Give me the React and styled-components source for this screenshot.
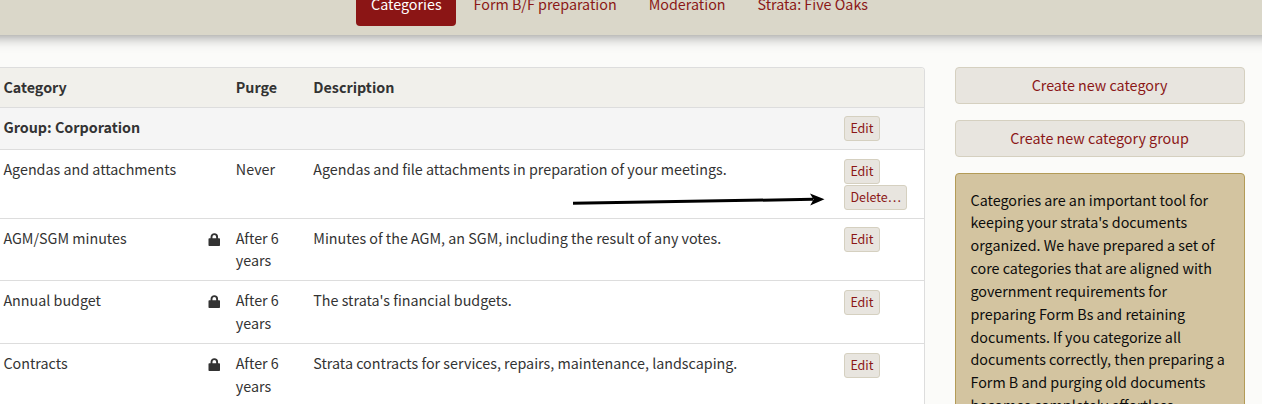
import React from "react";
import styled, { createGlobalStyle } from "styled-components";

const GlobalStyle = createGlobalStyle`
  * { box-sizing: border-box; }
  html, body { margin: 0; height: 404px; overflow: hidden; }
  body {
    background: #fbfbf9;
    color: #333;
    font: 14.32px/22.857px "Noto Sans CJK SC", "Noto Sans", sans-serif;
  }
`;

const Page = styled.div`
  height: 404px;
  overflow: hidden;
`;

const NavBar = styled.nav`
  display: flex;
  align-items: flex-end;
  gap: 2.4px;
  height: 35px;
  margin: 0 -20px;
  padding: 0 0 9px 376px;
  background: #dad7c9;
  box-shadow: 0 0 15px rgba(0, 0, 0, 0.5);
`;

const NavPill = styled.a`
  flex: none;
  height: 43px;
  padding: 10px 14.6px 10px 15px;
  border-radius: 4px;
  white-space: nowrap;
  color: ${(p) => (p.$active ? "#fff" : "#8b1717")};
  background: ${(p) => (p.$active ? "#8b1515" : "transparent")};
`;

const Content = styled.main`
  display: flex;
  align-items: flex-start;
  gap: 30px;
  padding-top: 32px;
`;

const Panel = styled.section`
  flex: none;
  width: 925px;
  background: #fff;
  border: 1px solid #ddd;
  border-left: 0;
  border-radius: 0 4px 4px 0;
  overflow: hidden;
`;

const Row = styled.div`
  display: grid;
  grid-template-columns: 204.5px 23.3px 77.5px 531.2px 1fr;
  height: ${(p) => p.$height}px;
  background: ${(p) => p.$tone || "#fff"};
  font-weight: ${(p) => (p.$strong ? 700 : 400)};
  border-top: ${(p) => (p.$first ? 0 : "1px solid #ddd")};
`;

const Cell = styled.div`
  padding: 8px 0 0 ${(p) => (p.$icon ? 3.5 : 8)}px;
  &:first-child { padding-left: 3.4px; }
`;

const Actions = styled.div`
  display: flex;
  flex-direction: column;
  align-items: flex-start;
  gap: 1px;
  padding: ${(p) => p.$top || 8}px 0 0 7.5px;
`;

const SmallButton = styled.button`
  height: 25px;
  padding: 0 5.4px 2px;
  border: 1px solid #d5d0c0;
  border-radius: 3px;
  background: #e8e5df;
  color: #8b1717;
  font: 400 12.5px/21px "Noto Sans CJK SC", "Noto Sans", sans-serif;
  white-space: nowrap;
`;

const LockSvg = styled.svg`
  display: block;
  width: 13px;
  height: 14px;
  margin-top: 6px;
`;

const Sidebar = styled.aside`
  display: flex;
  flex-direction: column;
  gap: 16px;
  width: 290px;
`;

const BlockButton = styled.button`
  height: 37px;
  padding: 0 1px 0 0;
  border: 1px solid #d5d0c0;
  border-radius: 4px;
  background: #e8e5df;
  color: #8b1717;
  font: inherit;
`;

const Note = styled.div`
  padding: 14.55px 14.5px;
  border: 1px solid #b39b57;
  border-radius: 4px;
  background: #d3c4a0;
  color: #0c0c0c;
  line-height: 22.84px;
  white-space: nowrap;
`;

const Arrow = styled.svg`
  position: absolute;
  left: 570px;
  top: 190px;
  width: 260px;
  height: 20px;
`;

const Lock = () => (
  <LockSvg viewBox="0 0 13 14">
    <path d="M3.5 6.5V3.9a2.8 2.8 0 0 1 5.6 0v2.6" fill="none" stroke="#333" strokeWidth="1.9" />
    <rect x="0.5" y="5.2" width="11.5" height="7.8" rx="0.8" fill="#333" />
  </LockSvg>
);

const navItems = ["Categories", "Form B/F preparation", "Moderation", "Strata: Five Oaks"];

const categories = [
  { name: "Agendas and attachments", purge: "Never", text: "Agendas and file attachments in preparation of your meetings.", removable: true, height: 68.55, top: 9 },
  { name: "AGM/SGM minutes", locked: true, purge: "After 6 years", text: "Minutes of the AGM, an SGM, including the result of any votes.", height: 62.85 },
  { name: "Annual budget", locked: true, purge: "After 6 years", text: "The strata's financial budgets.", height: 62.7, top: 8.5 },
  { name: "Contracts", locked: true, purge: "After 6 years", text: "Strata contracts for services, repairs, maintenance, landscaping.", height: 62.7, top: 8.8 },
];

const noteLines = [
  "Categories are an important tool for",
  "keeping your strata's documents",
  "organized. We have prepared a set of",
  "core categories that are aligned with",
  "government requirements for",
  "preparing Form Bs and retaining",
  "documents. If you categorize all",
  "documents correctly, then preparing a",
  "Form B and purging old documents",
  "becomes completely effortless.",
];

const PurgeText = styled.div`
  width: 55px;
`;

export default function App() {
  return (
    <Page>
      <GlobalStyle />
      <NavBar>
        {navItems.map((label, i) => (
          <NavPill key={label} $active={i === 0}>{label}</NavPill>
        ))}
      </NavBar>
      <Content>
        <Panel>
          <Row $first $strong $tone="#f1f0eb" $height={39}>
            <Cell>Category</Cell>
            <Cell />
            <Cell>Purge</Cell>
            <Cell>Description</Cell>
          </Row>
          <Row $strong $tone="#f5f5f5" $height={42}>
            <Cell>Group: Corporation</Cell>
            <Cell />
            <Cell />
            <Cell />
            <Actions><SmallButton>Edit</SmallButton></Actions>
          </Row>
          {categories.map((c) => (
            <Row key={c.name} $height={c.height}>
              <Cell>{c.name}</Cell>
              <Cell $icon>{c.locked && <Lock />}</Cell>
              <Cell><PurgeText>{c.purge}</PurgeText></Cell>
              <Cell>{c.text}</Cell>
              <Actions $top={c.top}>
                <SmallButton>Edit</SmallButton>
                {c.removable && <SmallButton>Delete…</SmallButton>}
              </Actions>
            </Row>
          ))}
        </Panel>
        <Sidebar>
          <BlockButton>Create new category</BlockButton>
          <BlockButton>Create new category group</BlockButton>
          <Note>
            {noteLines.map((line) => <div key={line}>{line}</div>)}
          </Note>
        </Sidebar>
      </Content>
      <Arrow viewBox="0 0 260 20">
        <path d="M3 13.2 L243 9.3" stroke="#000" strokeWidth="3" />
        <path d="M254.5 9.2 L240 3.5 L243.5 9.4 L240.2 15.4 Z" fill="#000" />
      </Arrow>
    </Page>
  );
}
